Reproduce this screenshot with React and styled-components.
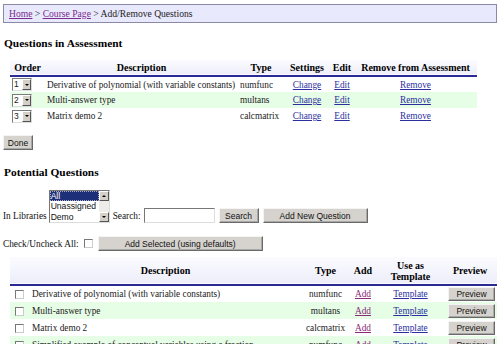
import React from "react";
import styled, { createGlobalStyle } from "styled-components";

const GlobalStyle = createGlobalStyle`
  html, body {
    margin: 0;
    padding: 0;
    background: #fff;
    font-family: "Liberation Serif", "Times New Roman", serif;
    font-size: 9.3px;
    color: #111;
  }
`;

const Page = styled.div`
  width: 500px;
  height: 344px;
  overflow: hidden;
  padding: 4px 3px 0;
  box-sizing: border-box;
`;

const Breadcrumb = styled.div`
  height: 19px;
  box-sizing: border-box;
  border: 1px solid #8a8aa6;
  background: #e9e9fd;
  padding: 0 5px;
  display: flex;
  align-items: center;
  font-size: 9.6px;
  color: #222;
`;

const CrumbLink = styled.a`
  color: #7a2b8c;
  text-decoration: underline;
`;

const SectionTitle = styled.h3`
  margin: ${(p) => p.$top}px 1px ${(p) => p.$bottom}px;
  font-size: 11.4px;
  line-height: 13px;
  font-weight: bold;
  color: #000;
`;

const DataTable = styled.table`
  margin-left: 7px;
  width: ${(p) => p.$width}px;
  border-collapse: collapse;
  table-layout: fixed;
  font-size: 9.3px;
`;

const HeadRow = styled.tr`
  background: linear-gradient(#fbfbff, #eeeefa);
  border-bottom: 2px solid #2a2a96;
`;

const HeadCell = styled.th`
  width: ${(p) => (p.$w ? `${p.$w}px` : "auto")};
  font-weight: bold;
  font-size: 10px;
  height: ${(p) => p.$h || 15}px;
  padding: 0;
  line-height: 11px;
  text-align: center;
  white-space: ${(p) => (p.$wrap ? "normal" : "nowrap")};
  color: #000;
`;

const Row = styled.tr`
  background: ${(p) => (p.$alt ? "#e6fde6" : "#fff")};
  height: ${(p) => p.$h || 16}px;
`;

const Cell = styled.td`
  padding: 0 ${(p) => p.$pad ?? 2}px;
  text-align: ${(p) => p.$align || "left"};
  white-space: nowrap;
  overflow: hidden;
  color: #222;
`;

const TextLink = styled.a`
  color: ${(p) => (p.$visited ? "#8a2a78" : "#2b2fa0")};
  text-decoration: underline;
`;

const OrderSelect = styled.span`
  display: inline-flex;
  align-items: stretch;
  height: 13px;
  width: 20px;
  box-sizing: border-box;
  border: 1px solid #7a7a7a;
  border-right-color: #ddd;
  border-bottom-color: #ddd;
  background: #fff;
  font-family: "Liberation Sans", Arial, sans-serif;
  font-size: 8.5px;
  vertical-align: middle;
`;

const SelectValue = styled.span`
  flex: 1;
  padding-left: 1px;
  line-height: 11px;
`;

const ArrowBox = styled.span`
  width: 9px;
  background: #d4d0c8;
  border: 1px solid;
  border-color: #fff #555 #555 #fff;
  box-sizing: border-box;
  display: flex;
  align-items: center;
  justify-content: center;
  &::after {
    content: "";
    border-left: 2px solid transparent;
    border-right: 2px solid transparent;
    border-${(p) => (p.$up ? "bottom" : "top")}: 2px solid #000;
  }
`;

const Button = styled.button`
  width: ${(p) => p.$w}px;
  height: ${(p) => p.$h || 15}px;
  padding: 0;
  background: #d6d3ce;
  border: 1px solid;
  border-color: #f4f4f4 #6a6a6a #6a6a6a #f4f4f4;
  box-shadow: inset -1px -1px 0 #a8a8a8;
  font-family: "Liberation Sans", Arial, sans-serif;
  font-size: 8.5px;
  color: #111;
  vertical-align: middle;
`;

const DoneWrap = styled.div`
  margin-top: 11px;
  height: 15px;
`;

const SearchBar = styled.div`
  display: flex;
  align-items: flex-end;
  gap: 4px;
`;

const Label = styled.span`
  line-height: 11px;
  padding-bottom: 1px;
`;

const ListBox = styled.div`
  width: 61px;
  height: 33px;
  box-sizing: border-box;
  border: 1px solid #777;
  border-right-color: #ddd;
  border-bottom-color: #ddd;
  display: flex;
  font-family: "Liberation Sans", Arial, sans-serif;
  font-size: 8.6px;
  margin-left: -2px;
  margin-right: -1px;
`;

const OptionList = styled.div`
  flex: 1;
  display: flex;
  flex-direction: column;
`;

const Option = styled.div`
  height: 10.3px;
  line-height: 10.3px;
  padding-left: 1px;
  background: ${(p) => (p.$selected ? "#1c2f78" : "#fff")};
  color: ${(p) => (p.$selected ? "#fff" : "#111")};
  outline: ${(p) => (p.$selected ? "1px dotted #aab" : "none")};
  outline-offset: -1px;
`;

const ScrollTrack = styled.div`
  width: 10px;
  display: flex;
  flex-direction: column;
  justify-content: space-between;
  background: #eeece8;
`;

const ScrollButton = styled(ArrowBox)`
  width: 10px;
  height: 10px;
`;

const TextInput = styled.input`
  width: 71px;
  height: 15px;
  box-sizing: border-box;
  border: 1px solid #777;
  border-right-color: #ddd;
  border-bottom-color: #ddd;
  padding: 0;
  margin: 0 0 0 -1px;
`;

const CheckRow = styled.div`
  display: flex;
  align-items: center;
  gap: 5px;
  margin-top: 13px;
`;

const Checkbox = styled.span`
  display: inline-block;
  width: 7px;
  height: 7px;
  border: 1px solid #777;
  border-right-color: #ccc;
  border-bottom-color: #ccc;
  background: #fff;
  vertical-align: middle;
`;

const BottomTable = styled(DataTable)`
  margin-top: 6px;
`;

const assessment = [
  { n: 1, desc: "Derivative of polynomial (with variable constants)", type: "numfunc" },
  { n: 2, desc: "Multi-answer type", type: "multans" },
  { n: 3, desc: "Matrix demo 2", type: "calcmatrix" },
];

const potential = [
  { desc: "Derivative of polynomial (with variable constants)", type: "numfunc" },
  { desc: "Multi-answer type", type: "multans" },
  { desc: "Matrix demo 2", type: "calcmatrix" },
  { desc: "Simplified example of conceptual variables using a fraction", type: "numfunc" },
];

export default function App() {
  return (
    <Page>
      <GlobalStyle />
      <Breadcrumb>
        <CrumbLink>Home</CrumbLink>&nbsp;&gt;&nbsp;<CrumbLink>Course Page</CrumbLink>&nbsp;&gt; Add/Remove Questions
      </Breadcrumb>

      <SectionTitle $top={14} $bottom={10}>Questions in Assessment</SectionTitle>
      <DataTable $width={467}>
        <thead>
          <HeadRow>
            <HeadCell $w={35}>Order</HeadCell>
            <HeadCell $w={193}>Description</HeadCell>
            <HeadCell $w={46}>Type</HeadCell>
            <HeadCell $w={46}>Settings</HeadCell>
            <HeadCell $w={24}>Edit</HeadCell>
            <HeadCell>Remove from Assessment</HeadCell>
          </HeadRow>
        </thead>
        <tbody>
          {assessment.map((q, i) => (
            <Row key={q.n} $alt={i === 1}>
              <Cell>
                <OrderSelect>
                  <SelectValue>{q.n}</SelectValue>
                  <ArrowBox />
                </OrderSelect>
              </Cell>
              <Cell>{q.desc}</Cell>
              <Cell>{q.type}</Cell>
              <Cell $align="center"><TextLink>Change</TextLink></Cell>
              <Cell $align="center"><TextLink>Edit</TextLink></Cell>
              <Cell $align="center"><TextLink>Remove</TextLink></Cell>
            </Row>
          ))}
        </tbody>
      </DataTable>

      <DoneWrap>
        <Button $w={30}>Done</Button>
      </DoneWrap>

      <SectionTitle $top={16} $bottom={11}>Potential Questions</SectionTitle>
      <SearchBar>
        <Label>In Libraries</Label>
        <ListBox>
          <OptionList>
            <Option $selected>All</Option>
            <Option>Unassigned</Option>
            <Option>Demo</Option>
          </OptionList>
          <ScrollTrack>
            <ScrollButton $up />
            <ScrollButton />
          </ScrollTrack>
        </ListBox>
        <Label>Search:</Label>
        <TextInput />
        <Button $w={40}>Search</Button>
        <Button $w={105}>Add New Question</Button>
      </SearchBar>

      <CheckRow>
        <span>Check/Uncheck All:</span>
        <Checkbox />
        <Button $w={165}>Add Selected (using defaults)</Button>
      </CheckRow>

      <BottomTable $width={487}>
        <thead>
          <HeadRow>
            <HeadCell $w={18} />
            <HeadCell $w={275} $h={27}>Description</HeadCell>
            <HeadCell $w={45}>Type</HeadCell>
            <HeadCell $w={30}>Add</HeadCell>
            <HeadCell $w={65} $wrap>Use as<br />Template</HeadCell>
            <HeadCell>Preview</HeadCell>
          </HeadRow>
        </thead>
        <tbody>
          {potential.map((q, i) => (
            <Row key={i} $alt={i % 2 === 1} $h={17}>
              <Cell $align="center"><Checkbox /></Cell>
              <Cell $pad={4}>{q.desc}</Cell>
              <Cell $align="center">{q.type}</Cell>
              <Cell $align="center"><TextLink $visited>Add</TextLink></Cell>
              <Cell $align="center"><TextLink>Template</TextLink></Cell>
              <Cell $align="right"><Button $w={47} $h={14}>Preview</Button></Cell>
            </Row>
          ))}
        </tbody>
      </BottomTable>
    </Page>
  );
}
